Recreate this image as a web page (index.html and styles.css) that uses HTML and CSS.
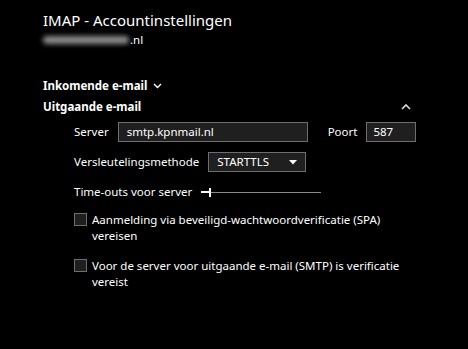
FILE: index.html
```html
<!DOCTYPE html>
<html lang="nl">
<head>
  <meta charset="UTF-8" />
  <title>IMAP - Accountinstellingen</title>
  <link rel="stylesheet" href="styles.css">
</head>
<body>
  <div class="page">
    <h1>IMAP - Accountinstellingen</h1>
    <div class="account"><span class="blurred"></span>.nl</div>

    <div class="section-head">
      <span>Inkomende e-mail</span>
      <svg width="9" height="6" viewBox="0 0 9 6"><polyline points="1,1 4.5,4.5 8,1" fill="none" stroke="#fff" stroke-width="1.4"/></svg>
    </div>

    <div class="section-head open">
      <span>Uitgaande e-mail</span>
      <svg class="caret" width="10" height="6" viewBox="0 0 10 6"><polyline points="1,5 5,1 9,5" fill="none" stroke="#ddd" stroke-width="1.6"/></svg>
    </div>

    <div class="fields">
      <div class="row">
        <label>Server</label>
        <div class="input server">smtp.kpnmail.nl</div>
        <label class="port-label">Poort</label>
        <div class="input port">587</div>
      </div>

      <div class="row">
        <label>Versleutelingsmethode</label>
        <div class="input select">
          <span>STARTTLS</span>
          <svg width="8" height="5" viewBox="0 0 8 5"><polygon points="0,0 8,0 4,4.5" fill="#fff"/></svg>
        </div>
      </div>

      <div class="row">
        <label>Time-outs voor server</label>
        <div class="slider">
          <div class="slider-fill"></div>
          <div class="slider-thumb"></div>
          <div class="slider-track"></div>
        </div>
      </div>

      <div class="check">
        <span class="box"></span>
        <span class="check-text">Aanmelding via beveiligd-wachtwoordverificatie (SPA) vereisen</span>
      </div>

      <div class="check">
        <span class="box"></span>
        <span class="check-text">Voor de server voor uitgaande e-mail (SMTP) is verificatie vereist</span>
      </div>
    </div>
  </div>
</body>
</html>
```

FILE: styles.css
```css
body {
  margin: 0;
  background: #000;
  color: #fff;
  font-family: 'Noto Sans', 'Open Sans', sans-serif;
  font-size: 11.5px;
}

.page {
  width: 369px;
  padding: 8px 0 0 43px;
}

h1 {
  margin: 0;
  font-size: 15px;
  font-weight: 400;
  line-height: 24px;
}

.account {
  display: flex;
  align-items: center;
  line-height: 16px;
}

.blurred {
  display: inline-block;
  width: 86px;
  height: 8px;
  margin-right: 1px;
  background: #8a8a8a;
  border-radius: 4px;
  filter: blur(2.5px);
}

.section-head {
  display: flex;
  align-items: center;
  gap: 6px;
  font-weight: 700;
  line-height: 18px;
  margin-top: 29px;
}

.section-head.open {
  justify-content: space-between;
  margin-top: 3px;
}

.caret {
  margin-right: 1px;
}

.fields {
  padding-left: 31px;
  margin-top: 6px;
}

.row {
  display: flex;
  align-items: center;
  margin-bottom: 10px;
}

.row label {
  flex: none;
  margin-right: 9px;
  line-height: 20px;
}

.input {
  flex: none;
  box-sizing: border-box;
  height: 20px;
  padding: 0 8px;
  background: #1f1f1f;
  border: 1px solid #6e6e6e;
  line-height: 18px;
}

.server {
  width: 190px;
}

.port-label.port-label {
  margin-left: 20px;
  margin-right: 9px;
}

.port {
  width: 50px;
  padding-left: 6px;
}

.select {
  display: flex;
  align-items: center;
  justify-content: space-between;
  width: 98px;
}

.slider {
  display: flex;
  align-items: center;
  width: 120px;
  height: 12px;
}

.slider-fill {
  width: 8px;
  height: 2px;
  background: #fff;
}

.slider-thumb {
  width: 2px;
  height: 9px;
  background: #fff;
}

.slider-track {
  flex: 1;
  height: 1px;
  background: #8a8a8a;
}

.check {
  display: flex;
  align-items: flex-start;
  margin-top: 8px;
}

.check + .check {
  margin-top: 14px;
}

.box {
  flex: none;
  box-sizing: border-box;
  width: 13px;
  height: 13px;
  margin: 1px 5px 0 0;
  background: #1f1f1f;
  border: 1px solid #6e6e6e;
}

.check-text {
  width: 310px;
  line-height: 16px;
}
```
